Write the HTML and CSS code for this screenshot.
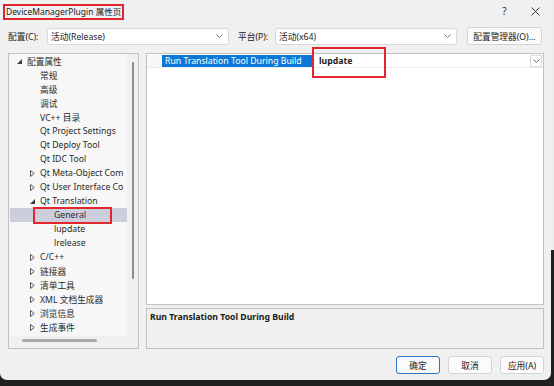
FILE: index.html
```html
<!DOCTYPE html>
<html lang="zh-CN">
<head>
	<meta charset="UTF-8">
	<title>DeviceManagerPlugin 属性页</title>
	<link rel="stylesheet" href="styles.css">
</head>
<body>

	<div class="window">
		<div class="titlebar">
			<span class="title">DeviceManagerPlugin 属性页</span>
			<span class="title_btn help">?</span>
			<span class="title_btn">
				<svg width="9" height="9" viewBox="0 0 9 9"><path d="M0.5 0.5 L8.5 8.5 M8.5 0.5 L0.5 8.5" stroke="#333" stroke-width="1" fill="none"/></svg>
			</span>
		</div>

		<div class="config_row">
			<label class="lbl lbl_config">配置(C):</label>
			<div class="select sel_config">
				<span>活动(Release)</span>
				<svg class="chevron" width="7" height="4" viewBox="0 0 7 4"><polyline points="0.5,0.5 3.5,3.5 6.5,0.5" stroke="#707070" fill="none"/></svg>
			</div>
			<label class="lbl lbl_platform">平台(P):</label>
			<div class="select sel_platform">
				<span>活动(x64)</span>
				<svg class="chevron" width="7" height="4" viewBox="0 0 7 4"><polyline points="0.5,0.5 3.5,3.5 6.5,0.5" stroke="#707070" fill="none"/></svg>
			</div>
			<button class="btn btn_manager">配置管理器(O)...</button>
		</div>

		<div class="main">
			<div class="tree">
				<div class="tree_list">
					<div class="row lvl0"><span class="arrow"><svg width="5" height="5" viewBox="0 0 5 5"><polygon points="5,0 5,5 0,5" fill="#404040"/></svg></span>配置属性</div>
					<div class="row lvl1"><span class="arrow"></span>常规</div>
					<div class="row lvl1"><span class="arrow"></span>高级</div>
					<div class="row lvl1"><span class="arrow"></span>调试</div>
					<div class="row lvl1"><span class="arrow"></span>VC++ 目录</div>
					<div class="row lvl1"><span class="arrow"></span>Qt Project Settings</div>
					<div class="row lvl1"><span class="arrow"></span>Qt Deploy Tool</div>
					<div class="row lvl1"><span class="arrow"></span>Qt IDC Tool</div>
					<div class="row lvl1"><span class="arrow"><svg width="5" height="7" viewBox="0 0 5 7"><polygon points="0.5,0.5 4.2,3.5 0.5,6.5" stroke="#555" fill="none"/></svg></span>Qt Meta-Object Com</div>
					<div class="row lvl1"><span class="arrow"><svg width="5" height="7" viewBox="0 0 5 7"><polygon points="0.5,0.5 4.2,3.5 0.5,6.5" stroke="#555" fill="none"/></svg></span>Qt User Interface Co</div>
					<div class="row lvl1"><span class="arrow"><svg width="5" height="5" viewBox="0 0 5 5"><polygon points="5,0 5,5 0,5" fill="#404040"/></svg></span>Qt Translation</div>
					<div class="row lvl2 selected"><span class="arrow"></span>General<span class="mark mark_general"></span></div>
					<div class="row lvl2"><span class="arrow"></span>lupdate</div>
					<div class="row lvl2"><span class="arrow"></span>lrelease</div>
					<div class="row lvl1"><span class="arrow"><svg width="5" height="7" viewBox="0 0 5 7"><polygon points="0.5,0.5 4.2,3.5 0.5,6.5" stroke="#555" fill="none"/></svg></span>C/C++</div>
					<div class="row lvl1"><span class="arrow"><svg width="5" height="7" viewBox="0 0 5 7"><polygon points="0.5,0.5 4.2,3.5 0.5,6.5" stroke="#555" fill="none"/></svg></span>链接器</div>
					<div class="row lvl1"><span class="arrow"><svg width="5" height="7" viewBox="0 0 5 7"><polygon points="0.5,0.5 4.2,3.5 0.5,6.5" stroke="#555" fill="none"/></svg></span>清单工具</div>
					<div class="row lvl1"><span class="arrow"><svg width="5" height="7" viewBox="0 0 5 7"><polygon points="0.5,0.5 4.2,3.5 0.5,6.5" stroke="#555" fill="none"/></svg></span>XML 文档生成器</div>
					<div class="row lvl1"><span class="arrow"><svg width="5" height="7" viewBox="0 0 5 7"><polygon points="0.5,0.5 4.2,3.5 0.5,6.5" stroke="#555" fill="none"/></svg></span>浏览信息</div>
					<div class="row lvl1"><span class="arrow"><svg width="5" height="7" viewBox="0 0 5 7"><polygon points="0.5,0.5 4.2,3.5 0.5,6.5" stroke="#555" fill="none"/></svg></span>生成事件</div>
				</div>
				<div class="vscroll"><div class="thumb_v"></div></div>
				<div class="hscroll"><div class="thumb_h"></div></div>
			</div>

			<div class="right">
				<div class="grid">
					<div class="grid_row">
						<div class="gutter"></div>
						<div class="name_cell">Run Translation Tool During Build</div>
						<div class="value_cell">lupdate<span class="mark mark_value"></span></div>
						<div class="drop_btn">
							<svg width="7" height="4" viewBox="0 0 7 4"><polyline points="0.5,0.5 3.5,3.5 6.5,0.5" stroke="#707070" fill="none"/></svg>
						</div>
					</div>
				</div>
				<div class="desc">
					<div class="desc_title">Run Translation Tool During Build</div>
				</div>
			</div>
		</div>

		<div class="buttons">
			<button class="btn btn_ok">确定</button>
			<button class="btn">取消</button>
			<button class="btn">应用(A)</button>
		</div>
	</div>

</body>
</html>
```

FILE: styles.css
```css
body {
	margin: 0;
	width: 554px;
	height: 386px;
	overflow: hidden;
	background: linear-gradient(#ededed 0, #ededed 250px, #202020 250px);
	font-family: "Noto Sans", "Noto Sans CJK SC", sans-serif;
	font-size: 8.7px;
	color: #1b1b1b;
}

.window {
	width: 551px;
	height: 380px;
	background: #f0f0f0;
	border-radius: 0 0 7px 7px;
	display: flex;
	flex-direction: column;
	box-sizing: border-box;
	padding: 0 0 0 8px;
}

/* title bar */
.titlebar {
	height: 22px;
	display: flex;
	align-items: center;
	margin-left: -8px;
}

.title {
	margin: 1px 0 0 3px;
	height: 16px;
	width: 121px;
	box-sizing: border-box;
	border: 2px solid #e3262e;
	padding-left: 1px;
	line-height: 12px;
	font-size: 8.5px;
	white-space: nowrap;
}

.title_btn {
	width: 31px;
	height: 16px;
	display: flex;
	align-items: center;
	justify-content: center;
	font-size: 10px;
	color: #333;
}

.help {
	margin-left: auto;
}

/* configuration row */
.config_row {
	height: 18px;
	margin-top: 5px;
	display: flex;
	align-items: center;
}

.lbl {
	white-space: nowrap;
}

.lbl_config {
	width: 39px;
}

.lbl_platform {
	width: 37px;
	margin-left: 9px;
}

.select {
	height: 17px;
	box-sizing: border-box;
	background: #fff;
	border: 1px solid #d9d9d9;
	border-radius: 3px;
	display: flex;
	align-items: center;
	padding: 0 5px 0 3px;
}

.select span {
	flex: 1;
}

.sel_config {
	width: 182px;
}

.sel_platform {
	width: 182px;
}

.btn {
	font-family: inherit;
	font-size: 8.7px;
	color: #1b1b1b;
	height: 18px;
	padding: 0;
	box-sizing: border-box;
	background: #fbfbfb;
	border: 1px solid #d3d3d3;
	border-radius: 3px;
}

.btn_manager {
	margin-left: 10px;
	width: 75px;
}

/* main area */
.main {
	margin-top: 8px;
	height: 296px;
	display: flex;
}

.tree {
	width: 131px;
	box-sizing: border-box;
	border: 1px solid #c2c2c2;
	display: grid;
	grid-template-columns: 118px 1fr;
	grid-template-rows: 1fr 12px;
	color: #2a2a2a;
}

.tree_list {
	background: #f7f7f7;
	margin-left: 1px;
	overflow: hidden;
}

.row {
	height: 14px;
	display: flex;
	align-items: center;
	white-space: nowrap;
	position: relative;
}

.row .arrow {
	width: 10px;
	flex: none;
	display: flex;
	align-items: center;
}

.lvl0 {
	padding-left: 7px;
}

.lvl1 {
	padding-left: 20px;
}

.lvl2 {
	padding-left: 34px;
}

.row.selected {
	background: #cccfdb;
}

.mark {
	position: absolute;
	box-sizing: border-box;
	border: 2px solid #e3262e;
}

.mark_general {
	left: 23px;
	top: -1px;
	width: 79px;
	height: 17px;
}

.vscroll {
	padding: 8px 0 0 5px;
}

.thumb_v {
	width: 2px;
	height: 217px;
	background: #8c8c8c;
	border-radius: 1px;
}

.hscroll {
	grid-column: 1 / 3;
	padding: 3px 0 0 13px;
}

.thumb_h {
	width: 75px;
	height: 3px;
	background: #a8a8a8;
	border-radius: 2px;
}

.right {
	margin-left: 7px;
	width: 398px;
	display: flex;
	flex-direction: column;
}

.grid {
	height: 252px;
	box-sizing: border-box;
	border: 1px solid #c2c2c2;
	background: #fff;
}

.grid_row {
	height: 14px;
	display: flex;
	border-bottom: 1px solid #ececec;
	padding-top: 1px;
	box-sizing: border-box;
}

.gutter {
	width: 15px;
	background: #f7f7f7;
}

.name_cell {
	width: 151px;
	background: #0a78d6;
	color: #fff;
	padding-left: 3px;
	box-sizing: border-box;
	line-height: 12px;
	white-space: nowrap;
}

.value_cell {
	flex: 1;
	padding-left: 6px;
	font-weight: bold;
	line-height: 12px;
	position: relative;
}

.mark_value {
	left: -1px;
	top: -8px;
	width: 74px;
	height: 31px;
}

.drop_btn {
	width: 12px;
	height: 12px;
	margin-right: 1px;
	box-sizing: border-box;
	border: 1px solid #dcdcdc;
	display: flex;
	align-items: center;
	justify-content: center;
}

.desc {
	margin-top: 3px;
	height: 41px;
	box-sizing: border-box;
	border: 1px solid #c2c2c2;
	padding: 2px 3px;
}

.desc_title {
	font-weight: bold;
}

/* dialog buttons */
.buttons {
	margin-top: 7px;
	display: flex;
	justify-content: flex-end;
	gap: 8px;
	padding-right: 7px;
}

.buttons .btn {
	width: 44px;
}

.btn_ok {
	border-color: #2a74c4;
}
```
